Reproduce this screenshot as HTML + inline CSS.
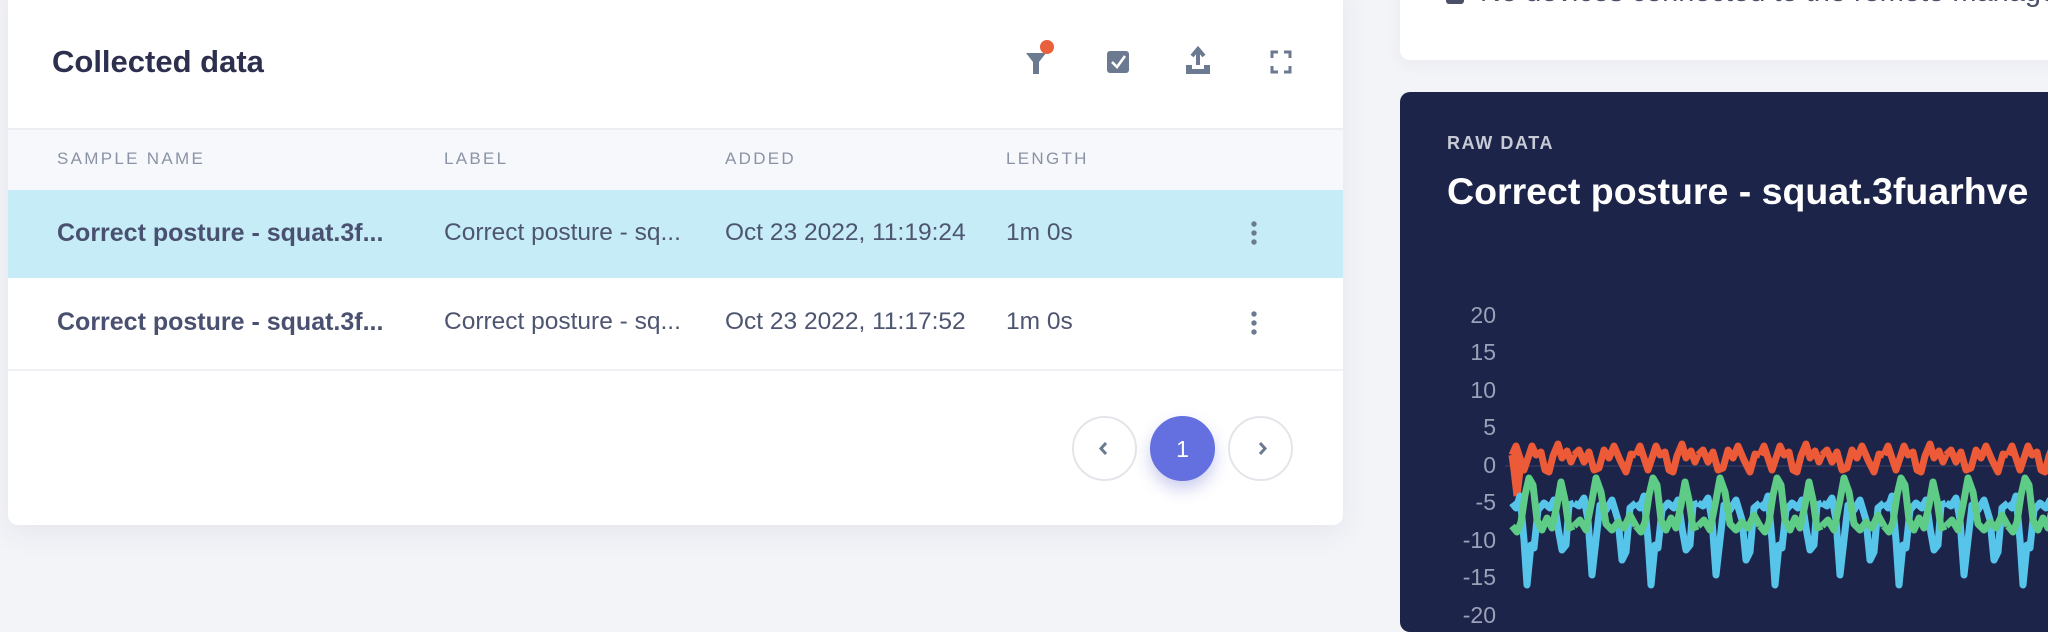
<!DOCTYPE html>
<html><head><meta charset="utf-8"><style>
*{margin:0;padding:0;box-sizing:border-box}
body{width:2048px;height:608px;overflow:hidden;background:#f3f4f8;font-family:"Liberation Sans",sans-serif;position:relative}
.card{position:absolute;left:8px;top:-20px;width:1335px;height:545px;background:#fff;border-radius:10px;box-shadow:0 8px 30px rgba(40,50,90,0.07)}
.abs{position:absolute;white-space:nowrap}
.title{left:52px;top:44px;font-size:31px;font-weight:bold;color:#2d2f4e}
.th{position:absolute;left:8px;top:128px;width:1335px;height:62px;background:#f7f8fb;border-top:2px solid #eceef3}
.hl{font-size:17px;letter-spacing:2.3px;color:#8a93a6;top:149px}
.r1{position:absolute;left:8px;top:190px;width:1335px;height:88px;background:#c6ecf7}
.cell{font-size:24.5px;color:#4e5570}
.b{font-weight:bold;color:#4a5170;font-size:25px}
.div{position:absolute;left:8px;top:369px;width:1335px;height:2px;background:#f0f1f5}
.pg{position:absolute;width:65px;height:65px;border-radius:50%;border:2px solid #e3e5ea;background:#fff;top:416px}
.dark{position:absolute;left:1400px;top:92px;width:660px;height:540px;background:#1c2449;border-radius:10px}
.top{position:absolute;left:1400px;top:-40px;width:660px;height:100px;background:#fff;border-radius:10px;box-shadow:0 4px 16px rgba(40,50,90,0.05)}
.yl{position:absolute;width:60px;text-align:right;left:1436px;font-size:23px;color:#9aa1b8}
</style></head><body>
<div class="card"></div>
<div class="abs title">Collected data</div>
<svg class="abs" style="left:1020px;top:38px" width="280" height="44">
<path d="M6 15 H26 L19 24 V36 H13 V24 Z" fill="#6b7a90"/>
<circle cx="27" cy="9" r="7" fill="#e8603c"/>
<rect x="87" y="13" width="22" height="22" rx="3" fill="#6b7a90"/>
<path d="M92 24 L97 29 L105 18" stroke="#fff" stroke-width="2.6" fill="none"/>
<path d="M178 27 V12 M172 18 L178 11 L184 18" stroke="#6b7a90" stroke-width="4" fill="none"/>
<path d="M166 27 V36 H190 V27 H184 V31 H172 V27 Z" fill="#6b7a90"/>
<path d="M252 20 V14 H258 M264 14 H270 V20 M270 28 V34 H264 M258 34 H252 V28" stroke="#6b7a90" stroke-width="3" fill="none"/>
</svg>
<div class="th"></div>
<div class="abs hl" style="left:57px">SAMPLE NAME</div>
<div class="abs hl" style="left:444px">LABEL</div>
<div class="abs hl" style="left:725px">ADDED</div>
<div class="abs hl" style="left:1006px">LENGTH</div>
<div class="r1"></div>
<div class="abs cell b" style="left:57px;top:219px">Correct posture - squat.3f...</div>
<div class="abs cell" style="left:444px;top:219px">Correct posture - sq...</div>
<div class="abs cell" style="left:725px;top:219px">Oct 23 2022, 11:19:24</div>
<div class="abs cell" style="left:1006px;top:219px">1m 0s</div>
<div class="abs cell b" style="left:57px;top:308px">Correct posture - squat.3f...</div>
<div class="abs cell" style="left:444px;top:308px">Correct posture - sq...</div>
<div class="abs cell" style="left:725px;top:308px">Oct 23 2022, 11:17:52</div>
<div class="abs cell" style="left:1006px;top:308px">1m 0s</div>
<svg class="abs" style="left:1248px;top:220px" width="12" height="120">
<circle cx="6" cy="4" r="2.7" fill="#6b7a90"/><circle cx="6" cy="13" r="2.7" fill="#6b7a90"/><circle cx="6" cy="22" r="2.7" fill="#6b7a90"/>
<circle cx="6" cy="94" r="2.7" fill="#6b7a90"/><circle cx="6" cy="103" r="2.7" fill="#6b7a90"/><circle cx="6" cy="112" r="2.7" fill="#6b7a90"/>
</svg>
<div class="div"></div>
<div class="pg" style="left:1072px"></div>
<div class="pg" style="left:1150px;background:#6470df;border-color:#6470df;box-shadow:0 8px 16px rgba(80,90,200,0.3)"></div>
<div class="pg" style="left:1228px"></div>
<svg class="abs" style="left:1072px;top:416px" width="222" height="65">
<path d="M34 27 L29 32.5 L34 38" stroke="#6b7a90" stroke-width="3" fill="none"/>
<path d="M188 27 L193 32.5 L188 38" stroke="#6b7a90" stroke-width="3" fill="none"/>
<text x="110.5" y="41" text-anchor="middle" font-family="Liberation Sans" font-size="23" fill="#fff">1</text>
</svg>
<div class="top"></div>
<div class="abs" style="left:1446px;top:-24px;width:18px;height:28px;background:#4a5068;border-radius:3px"></div>
<div class="abs" style="left:1480px;top:-24px;font-size:29px;color:#4a5068">No devices connected to the remote management</div>
<div class="dark"></div>
<div class="abs" style="left:1447px;top:133px;font-size:18px;font-weight:bold;letter-spacing:1.6px;color:#c8cbd6">RAW DATA</div>
<div class="abs" style="left:1447px;top:170px;font-size:37.5px;font-weight:bold;color:#fff">Correct posture - squat.3fuarhve</div>
<div class="yl" style="top:302px">20</div>
<div class="yl" style="top:339px">15</div>
<div class="yl" style="top:377px">10</div>
<div class="yl" style="top:414px">5</div>
<div class="yl" style="top:452px">0</div>
<div class="yl" style="top:489px">-5</div>
<div class="yl" style="top:527px">-10</div>
<div class="yl" style="top:564px">-15</div>
<div class="yl" style="top:602px">-20</div>
<svg class="abs" style="left:0;top:0" width="2048" height="608">
<defs>
<path id="bl" d="M0 503 L4 508 L8 496 L12 540 L15 585 L19 545 L22 548 L26 510 L32 503 L38 508 L42 500 L46 528 L50 550 L54 545 L57 505 L62 503" stroke="#57c5ea" stroke-width="7" fill="none" stroke-linejoin="round"/>
<path id="bl2" d="M0 503 L5 506 L10 498 L14 520 L18 575 L22 540 L26 505 L32 510 L38 500 L44 520 L48 560 L52 552 L56 508 L62 503" stroke="#57c5ea" stroke-width="7" fill="none" stroke-linejoin="round"/>
<path id="gr" d="M0 526 L5 532 L9 522 L13 495 L17 478 L21 485 L25 520 L30 530 L35 518 L40 528 L45 505 L49 482 L53 500 L57 528 L62 526" stroke="#5ecb86" stroke-width="7" fill="none" stroke-linejoin="round"/>
<path id="gr2" d="M0 526 L6 520 L12 530 L18 500 L22 478 L27 492 L32 524 L38 530 L44 522 L50 528 L56 515 L62 526" stroke="#5ecb86" stroke-width="7" fill="none" stroke-linejoin="round"/>
<path id="rd" d="M0 455 L4 446 L8 458 L12 470 L16 458 L20 446 L24 455 L29 452 L33 470 L37 472 L41 456 L46 444 L50 458 L55 451 L59 462 L62 455" stroke="#ec5a37" stroke-width="7" fill="none" stroke-linejoin="round"/>
<path id="rd2" d="M0 455 L5 450 L10 462 L15 452 L20 470 L25 468 L30 450 L35 458 L40 446 L46 460 L52 472 L57 454 L62 455" stroke="#ec5a37" stroke-width="7" fill="none" stroke-linejoin="round"/>
</defs>
<line x1="1505" y1="466" x2="2048" y2="466" stroke="#3a4266" stroke-width="1"/>
<path d="M1512 455 L1514 470 L1517 496 L1520 470 L1512 455" stroke="#ec5a37" stroke-width="7" fill="none"/>
<g><use href="#bl" x="1512"/><use href="#bl2" x="1574"/><use href="#bl" x="1636"/><use href="#bl2" x="1698"/><use href="#bl" x="1760"/><use href="#bl2" x="1822"/><use href="#bl" x="1884"/><use href="#bl2" x="1946"/><use href="#bl" x="2008"/></g>
<g><use href="#gr" x="1512"/><use href="#gr2" x="1574"/><use href="#gr" x="1636"/><use href="#gr2" x="1698"/><use href="#gr" x="1760"/><use href="#gr2" x="1822"/><use href="#gr" x="1884"/><use href="#gr2" x="1946"/><use href="#gr" x="2008"/></g>
<g><use href="#rd" x="1512"/><use href="#rd2" x="1574"/><use href="#rd" x="1636"/><use href="#rd2" x="1698"/><use href="#rd" x="1760"/><use href="#rd2" x="1822"/><use href="#rd" x="1884"/><use href="#rd2" x="1946"/><use href="#rd" x="2008"/></g>
</svg>
</body></html>
